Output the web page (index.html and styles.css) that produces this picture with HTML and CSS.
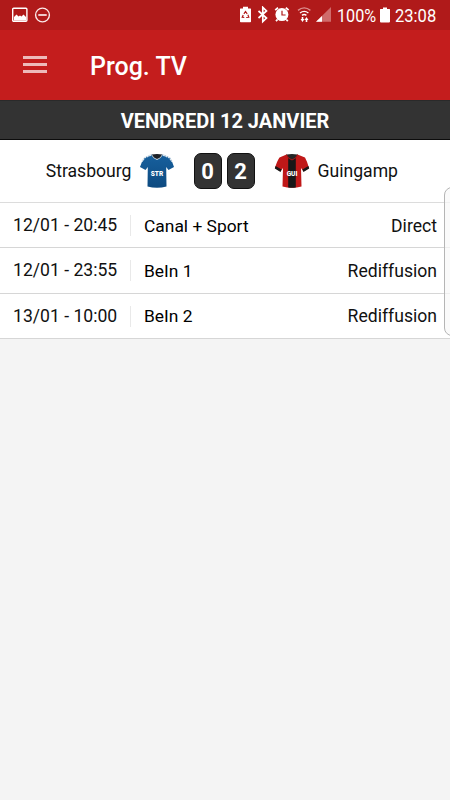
FILE: index.html
```html
<!DOCTYPE html>
<html lang="fr">
<head>
    <meta charset="UTF-8">
    <meta name="viewport" content="width=device-width, initial-scale=1.0">
    <title>Prog. TV</title>
    <link rel="stylesheet" href="styles.css">
</head>
<body>
    <div class="status-bar">
        <svg class="status-left" width="40" height="16" viewBox="0 0 40 16">
            <rect x="0.7" y="1.2" width="14.2" height="13" rx="1" fill="none" stroke="#fff" stroke-width="1.4"/>
            <path d="M2 13.500V10l2.500-2.500 2 2 1.500-1 1.500 1 2-2L14 10v3.500z" fill="#fff"/>
            <circle cx="30.500" cy="8" r="6.900" fill="none" stroke="#fbe9e9" stroke-width="1.400"/>
            <path d="M26.300 8h8.400" stroke="#fbe9e9" stroke-width="1.700"/>
        </svg>
        <div class="status-right">
            <svg width="94" height="18" viewBox="0 0 94 18">
                <!-- recycling battery -->
                <path d="M3 2.500V.8h5v1.700h2.500q.5 0 .5.500v12.500q0 .8-.8.800H.8q-.8 0-.8-.800V3q0-.5.500-.500z" fill="#fff"/>
                <path d="M3.900 7.800l1.600-2.300 1.700 2.300M7.900 8.800l.9 2.500-2.600.2M4.300 11.500l-2.100-.3 1-2.300" fill="none" stroke="#b01a1a" stroke-width="1.200"/>
                <!-- bluetooth -->
                <path d="M18.500 5l8 7-3.700 3.600V1.400L26.500 5l-8 7" fill="none" stroke="#fff" stroke-width="1.700"/>
                <!-- alarm -->
                <path d="M35.200 4.100l2.800-2.400M48.600 4.100l-2.800-2.400M37.500 13.500l-1.500 1.700M46.300 13.500l1.500 1.700" stroke="#fff" stroke-width="1.800"/>
                <circle cx="41.900" cy="8.600" r="6.500" fill="#fff"/>
                <path d="M42 4.800V9h3.600" fill="none" stroke="#b01a1a" stroke-width="1.200"/>
                <!-- wifi -->
                <g fill="none" stroke="#fff" stroke-width="1.400">
                    <path d="M58 4.400q6.200-5 12.400 0" stroke="#dc9090"/>
                    <path d="M60 7q4.200-3.300 8.400 0M62 9.400q2.200-1.700 4.400 0"/>
                </g>
                <path d="M60.500 13h1.200v-2h1.600v2h1.200l-2 3zM66.500 11l2 3h-1.200v2h-1.600v-2h-1.200z" fill="#fff"/>
                <!-- signal -->
                <path d="M91 1v14.800H76z" fill="#cf6b6b"/>
                <path d="M82 10v5.800h-6z" fill="#fff"/>
            </svg>
            <span class="battery-level">100%</span>
            <svg class="battery" width="10" height="16" viewBox="0 0 10 16">
                <path d="M3 2V.5h4V2h2.500q.5 0 .5.500v12q0 1-1 1H1q-1 0-1-1v-12Q0 2 .5 2z" fill="#fff"/>
            </svg>
            <span class="clock">23:08</span>
        </div>
    </div>

    <div class="toolbar">
        <div class="menu">
            <span></span>
            <span></span>
            <span></span>
        </div>
        <h1>Prog. TV</h1>
    </div>

    <div class="date">VENDREDI 12 JANVIER</div>

    <div class="match">
        <div class="team home">
            <span>Strasbourg</span>
            <svg class="shirt" width="36" height="36" viewBox="0 0 36 36">
                <defs>
                    <linearGradient id="blue" x2="0" y2="1">
                        <stop offset="0" stop-color="#17609e"/>
                        <stop offset="1" stop-color="#0d4a80"/>
                    </linearGradient>
                </defs>
                <path d="M12.500 1.500Q18 .3 23.500 1.500L22 6h-8z" fill="#1c2026"/>
                <path d="M12.500 1.500Q14 5.500 18 6.500 22 5.500 23.500 1.500L31 4.500Q33 8 35 14l-5.500 3-2.300-3 .3 19.500Q18 36 8.500 33.500L8.800 14 6.500 17 1 14Q3 8 5.500 4.500z" fill="url(#blue)"/>
                <path d="M12.500 1.500Q14 5.500 18 6.500 22 5.500 23.500 1.500" fill="none" stroke="#c9d8e4" stroke-width=".9"/>
                <path d="M12 2L5.500 4.800 3 8.500M24 2l6.500 2.800L33 8.500" fill="none" stroke="#dbe6ee" stroke-width="1.500" stroke-dasharray="2 .7"/>
                <text x="18" y="22.500" class="shirt-name">STR</text>
            </svg>
        </div>
        <div class="score">
            <span>0</span>
            <span>2</span>
        </div>
        <div class="team away">
            <svg class="shirt" width="36" height="36" viewBox="0 0 36 36">
                <path d="M12.500 1.500Q18 .3 23.500 1.500L22 6h-8z" fill="#252525"/>
                <path d="M12.500 1.500Q14 5.500 18 6.500 22 5.500 23.500 1.500L31 4.500Q33 8 35 15l-5.500 3.500L27 15l.5 18.500Q18 36 8.500 33.500L9 15l-2.500 3.500L1 15Q3 8 5.500 4.500z" fill="#c01818"/>
                <path d="M14.200 5q3.800 3 7.600 0v29.500q-3.800.5-7.600 0z" fill="#171717"/>
                <path d="M1.600 13l6 3.500L6.500 19 .8 15.600zM34.400 13l-6 3.500L29.500 19l5.700-3.400z" fill="#181818"/>
                <path d="M12.500 1.500Q14 6 18 7 22 6 23.500 1.500" fill="none" stroke="#951414" stroke-width="1"/>
                <text x="18" y="22.500" class="shirt-name">GUI</text>
            </svg>
            <span>Guingamp</span>
        </div>
    </div>

    <div class="programs">
        <div class="program">
            <span class="time">12/01 - 20:45</span>
            <span class="channel">Canal + Sport</span>
            <span class="type">Direct</span>
        </div>
        <div class="program">
            <span class="time">12/01 - 23:55</span>
            <span class="channel">BeIn 1</span>
            <span class="type">Rediffusion</span>
        </div>
        <div class="program">
            <span class="time">13/01 - 10:00</span>
            <span class="channel">BeIn 2</span>
            <span class="type">Rediffusion</span>
        </div>
    </div>

    <div class="edge-handle"></div>
</body>
</html>
```
FILE: styles.css
```css
* {
    box-sizing: border-box;
}
body {
    font-family: Roboto, "Liberation Sans", sans-serif;
    margin: 0;
    min-height: 800px;
    background-color: #f4f4f4;
    color: #111;
    position: relative;
    overflow: hidden;
}
svg {
    display: block;
    flex: none;
}
.status-bar {
    display: flex;
    justify-content: space-between;
    align-items: center;
    height: 30px;
    padding: 0 13px 0 12px;
    background: #b01a1a;
    color: #fff;
}
.status-right {
    display: flex;
    align-items: center;
    font-size: 18px;
    white-space: nowrap;
}
.battery-level,
.clock {
    transform: scaleX(0.9);
    transform-origin: left;
    width: 41px;
}
.battery-level {
    margin-left: 3px;
}
.clock {
    transform: scaleX(0.92);
    width: 42px;
}
.battery {
    margin: 0 5px 0 2px;
}
.toolbar {
    display: flex;
    align-items: center;
    height: 70px;
    padding-left: 23px;
    background: #c41d1d;
}
.menu {
    display: flex;
    flex-direction: column;
    gap: 4px;
    width: 24px;
    margin-bottom: 1px;
}
.menu span {
    height: 3px;
    background: #eeb9b9;
}
.toolbar h1 {
    margin: 2px 0 0 43px;
    font-size: 25px;
    font-weight: 500;
    color: #fff;
}
.date {
    height: 40px;
    line-height: 41px;
    background: #333;
    border-top: 1px solid #2a2a2a;
    border-bottom: 1px solid #0c0c0c;
    color: #fff;
    font-size: 20px;
    font-weight: bold;
    text-align: center;
}
.match {
    display: grid;
    grid-template-columns: 1fr 61px 1fr;
    align-items: center;
    height: 63px;
    padding-right: 2px;
    background: #fff;
    border-bottom: 1px solid #dcdcdc;
    font-size: 17.6px;
}
.team {
    display: flex;
    align-items: center;
    gap: 7px;
}
.home {
    justify-content: flex-end;
    padding-right: 19px;
}
.away {
    gap: 8px;
    padding-left: 19px;
}
.shirt-name {
    fill: #fff;
    font-size: 6.5px;
    font-weight: 900;
    text-anchor: middle;
}
.score {
    display: flex;
    gap: 5px;
}
.score span {
    width: 28px;
    height: 36px;
    border: 1px solid #111;
    border-radius: 7px;
    background: #333;
    color: #fff;
    font-size: 22px;
    font-weight: bold;
    line-height: 35px;
    text-align: center;
}
.program {
    display: flex;
    align-items: center;
    height: 45.3px;
    padding: 1px 13px 0;
    background: #fff;
    border-bottom: 1px solid #d6d6d6;
    font-size: 17.6px;
}
.time {
    width: 118px;
    line-height: 21px;
    border-right: 1px solid #e9e9e9;
}
.channel {
    flex: 1;
    padding-left: 13px;
    color: #000;
    font-size: 17.4px;
}
.edge-handle {
    position: absolute;
    top: 187px;
    right: -10px;
    width: 16px;
    height: 149px;
    border: 1px solid #b5b5b5;
    border-radius: 8px;
    background: rgba(248, 248, 248, 0.7);
}
```
